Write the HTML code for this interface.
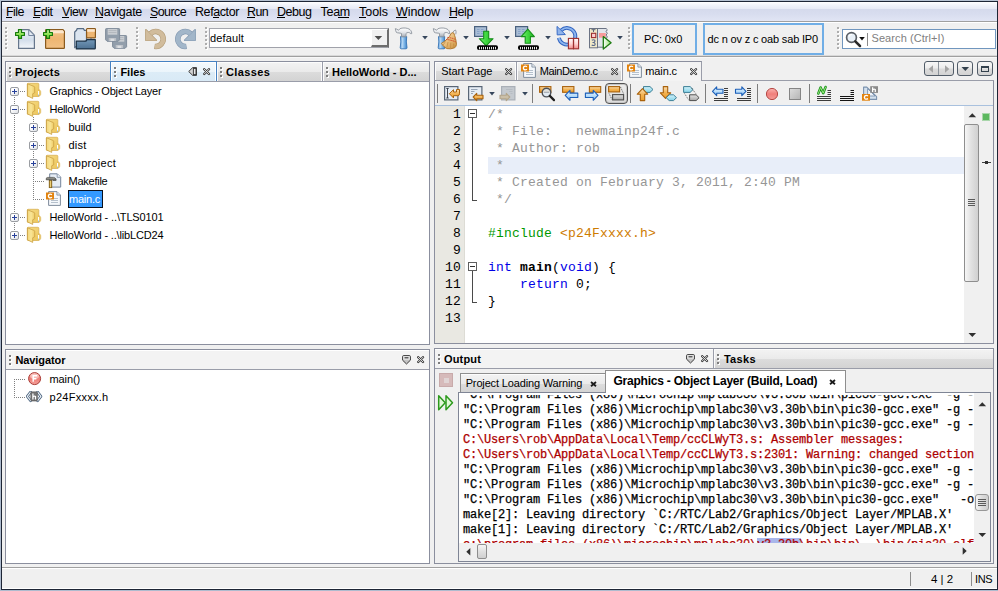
<!DOCTYPE html>
<html><head><meta charset="utf-8"><title>MPLAB X IDE</title><style>html,body{margin:0;padding:0}body{width:998px;height:591px;position:relative;overflow:hidden;background:#f0f0f0;font-family:'Liberation Sans', sans-serif;font-size:12px;color:#000}div,span,svg{position:absolute;display:block;box-sizing:border-box}span{white-space:pre}</style></head>
<body>
<div style="left:0px;top:0px;width:998px;height:591px;background:linear-gradient(#b6c2d2,#a9b6c8 50%,#aebbce)"></div>
<div style="left:1px;top:1px;width:997px;height:589px;background:#1d2535"></div>
<div style="left:2px;top:2px;width:995px;height:587px;background:#f0f0f0"></div>
<div style="left:2px;top:588px;width:995px;height:1px;background:#ffffff"></div>
<div style="left:2px;top:2px;width:995px;height:19px;background:linear-gradient(#ffffff 0,#f1f3fa 3px,#e6e9f5 7px,#d5daec 7px,#d8ddef 12px,#e1e5f4 19px)"></div>
<div style="left:2px;top:21px;width:995px;height:1px;background:#a0a0a0"></div>
<div style="left:2px;top:22px;width:995px;height:1px;background:#ffffff"></div>
<span style="left:6px;top:4px;font-size:12.5px;line-height:16px;letter-spacing:-0.539px;">File</span>
<span style="left:33px;top:4px;font-size:12.5px;line-height:16px;letter-spacing:-0.512px;">Edit</span>
<span style="left:62px;top:4px;font-size:12.5px;line-height:16px;letter-spacing:-0.469px;">View</span>
<span style="left:95px;top:4px;font-size:12.5px;line-height:16px;letter-spacing:-0.293px;">Navigate</span>
<span style="left:150px;top:4px;font-size:12.5px;line-height:16px;letter-spacing:-0.602px;">Source</span>
<span style="left:195px;top:4px;font-size:12.5px;line-height:16px;letter-spacing:-0.406px;">Refactor</span>
<span style="left:247px;top:4px;font-size:12.5px;line-height:16px;letter-spacing:-0.646px;">Run</span>
<span style="left:277px;top:4px;font-size:12.5px;line-height:16px;letter-spacing:-0.469px;">Debug</span>
<span style="left:320.5px;top:4px;font-size:12.5px;line-height:16px;letter-spacing:-0.270px;">Team</span>
<span style="left:359px;top:4px;font-size:12.5px;line-height:16px;letter-spacing:-0.037px;">Tools</span>
<span style="left:396px;top:4px;font-size:12.5px;line-height:16px;letter-spacing:-0.078px;">Window</span>
<span style="left:449px;top:4px;font-size:12.5px;line-height:16px;letter-spacing:-0.430px;">Help</span>
<div style="left:6px;top:17px;width:6px;height:1px;background:#000"></div>
<div style="left:33px;top:17px;width:7px;height:1px;background:#000"></div>
<div style="left:62px;top:17px;width:7px;height:1px;background:#000"></div>
<div style="left:95px;top:17px;width:8px;height:1px;background:#000"></div>
<div style="left:150px;top:17px;width:7px;height:1px;background:#000"></div>
<div style="left:213px;top:17px;width:6px;height:1px;background:#000"></div>
<div style="left:247px;top:17px;width:8px;height:1px;background:#000"></div>
<div style="left:277px;top:17px;width:8px;height:1px;background:#000"></div>
<div style="left:338px;top:17px;width:11px;height:1px;background:#000"></div>
<div style="left:359px;top:17px;width:7px;height:1px;background:#000"></div>
<div style="left:396px;top:17px;width:11px;height:1px;background:#000"></div>
<div style="left:449px;top:17px;width:8px;height:1px;background:#000"></div>
<div style="left:2px;top:55px;width:995px;height:1px;background:#d9d9d9"></div>
<div style="left:2px;top:56px;width:995px;height:1px;background:#a0a0a0"></div>
<div style="left:2px;top:57px;width:995px;height:1px;background:#f8f8f8"></div>
<div style="left:6px;top:28px;width:2px;height:2px;background:#ffffff"></div>
<div style="left:5px;top:27px;width:2px;height:2px;background:#adadad"></div>
<div style="left:6px;top:32px;width:2px;height:2px;background:#ffffff"></div>
<div style="left:5px;top:31px;width:2px;height:2px;background:#adadad"></div>
<div style="left:6px;top:36px;width:2px;height:2px;background:#ffffff"></div>
<div style="left:5px;top:35px;width:2px;height:2px;background:#adadad"></div>
<div style="left:6px;top:40px;width:2px;height:2px;background:#ffffff"></div>
<div style="left:5px;top:39px;width:2px;height:2px;background:#adadad"></div>
<div style="left:6px;top:44px;width:2px;height:2px;background:#ffffff"></div>
<div style="left:5px;top:43px;width:2px;height:2px;background:#adadad"></div>
<div style="left:6px;top:48px;width:2px;height:2px;background:#ffffff"></div>
<div style="left:5px;top:47px;width:2px;height:2px;background:#adadad"></div>
<div style="left:137px;top:28px;width:2px;height:2px;background:#ffffff"></div>
<div style="left:136px;top:27px;width:2px;height:2px;background:#adadad"></div>
<div style="left:137px;top:32px;width:2px;height:2px;background:#ffffff"></div>
<div style="left:136px;top:31px;width:2px;height:2px;background:#adadad"></div>
<div style="left:137px;top:36px;width:2px;height:2px;background:#ffffff"></div>
<div style="left:136px;top:35px;width:2px;height:2px;background:#adadad"></div>
<div style="left:137px;top:40px;width:2px;height:2px;background:#ffffff"></div>
<div style="left:136px;top:39px;width:2px;height:2px;background:#adadad"></div>
<div style="left:137px;top:44px;width:2px;height:2px;background:#ffffff"></div>
<div style="left:136px;top:43px;width:2px;height:2px;background:#adadad"></div>
<div style="left:137px;top:48px;width:2px;height:2px;background:#ffffff"></div>
<div style="left:136px;top:47px;width:2px;height:2px;background:#adadad"></div>
<div style="left:206px;top:28px;width:2px;height:2px;background:#ffffff"></div>
<div style="left:205px;top:27px;width:2px;height:2px;background:#adadad"></div>
<div style="left:206px;top:32px;width:2px;height:2px;background:#ffffff"></div>
<div style="left:205px;top:31px;width:2px;height:2px;background:#adadad"></div>
<div style="left:206px;top:36px;width:2px;height:2px;background:#ffffff"></div>
<div style="left:205px;top:35px;width:2px;height:2px;background:#adadad"></div>
<div style="left:206px;top:40px;width:2px;height:2px;background:#ffffff"></div>
<div style="left:205px;top:39px;width:2px;height:2px;background:#adadad"></div>
<div style="left:206px;top:44px;width:2px;height:2px;background:#ffffff"></div>
<div style="left:205px;top:43px;width:2px;height:2px;background:#adadad"></div>
<div style="left:206px;top:48px;width:2px;height:2px;background:#ffffff"></div>
<div style="left:205px;top:47px;width:2px;height:2px;background:#adadad"></div>
<div style="left:629px;top:28px;width:2px;height:2px;background:#ffffff"></div>
<div style="left:628px;top:27px;width:2px;height:2px;background:#adadad"></div>
<div style="left:629px;top:32px;width:2px;height:2px;background:#ffffff"></div>
<div style="left:628px;top:31px;width:2px;height:2px;background:#adadad"></div>
<div style="left:629px;top:36px;width:2px;height:2px;background:#ffffff"></div>
<div style="left:628px;top:35px;width:2px;height:2px;background:#adadad"></div>
<div style="left:629px;top:40px;width:2px;height:2px;background:#ffffff"></div>
<div style="left:628px;top:39px;width:2px;height:2px;background:#adadad"></div>
<div style="left:629px;top:44px;width:2px;height:2px;background:#ffffff"></div>
<div style="left:628px;top:43px;width:2px;height:2px;background:#adadad"></div>
<div style="left:629px;top:48px;width:2px;height:2px;background:#ffffff"></div>
<div style="left:628px;top:47px;width:2px;height:2px;background:#adadad"></div>
<div style="left:838px;top:28px;width:2px;height:2px;background:#ffffff"></div>
<div style="left:837px;top:27px;width:2px;height:2px;background:#adadad"></div>
<div style="left:838px;top:32px;width:2px;height:2px;background:#ffffff"></div>
<div style="left:837px;top:31px;width:2px;height:2px;background:#adadad"></div>
<div style="left:838px;top:36px;width:2px;height:2px;background:#ffffff"></div>
<div style="left:837px;top:35px;width:2px;height:2px;background:#adadad"></div>
<div style="left:838px;top:40px;width:2px;height:2px;background:#ffffff"></div>
<div style="left:837px;top:39px;width:2px;height:2px;background:#adadad"></div>
<div style="left:838px;top:44px;width:2px;height:2px;background:#ffffff"></div>
<div style="left:837px;top:43px;width:2px;height:2px;background:#adadad"></div>
<div style="left:838px;top:48px;width:2px;height:2px;background:#ffffff"></div>
<div style="left:837px;top:47px;width:2px;height:2px;background:#adadad"></div>
<svg style="left:13px;top:27px" width="24" height="24" viewBox="0 0 24 24"><defs><linearGradient id="g1" x1="0" y1="0" x2="0" y2="1"><stop offset="0" stop-color="#eef2f8"/><stop offset="0.55" stop-color="#d3deeb"/><stop offset="1" stop-color="#f4f7fb"/></linearGradient></defs><path d="M5.600 2.600h10.300l5.500 5.700v13.100h-15.800z" fill="url(#g1)" stroke="#66768c" stroke-width="1.200"/><path d="M15.700 2.800v5.700h5.500z" fill="#e6ecf4" stroke="#7888a0" stroke-width="1"/><defs><linearGradient id="g2" x1="0" y1="0" x2="0" y2="1"><stop offset="0" stop-color="#d4f8b0"/><stop offset="0.5" stop-color="#8ee255"/><stop offset="1" stop-color="#5fc82f"/></linearGradient></defs><path d="M5.5 2.6h3v2.900h2.900v3h-2.900v2.900h-3v-2.900h-2.900v-3h2.900z" fill="url(#g2)" stroke="#167a0c" stroke-width="1.200" stroke-linejoin="round"/></svg>
<svg style="left:42px;top:27px" width="24" height="24" viewBox="0 0 24 24"><defs><linearGradient id="g3" x1="0" y1="0" x2="0" y2="1"><stop offset="0" stop-color="#f2c48c"/><stop offset="0.5" stop-color="#eeb672"/><stop offset="1" stop-color="#f1c084"/></linearGradient></defs><path d="M3.600 3.300q0-0.700 0.700-0.700h16.600l1.500 1.700v16.400q0 0.700-0.700 0.700h-17.400q-0.700 0-0.700-0.700z" fill="url(#g3)" stroke="#8a5a1e" stroke-width="1.200"/><path d="M4.300 3.300h16.500l1 1.200v1.700h-17.500z" fill="#fbe6cc"/><defs><linearGradient id="g4" x1="0" y1="0" x2="0" y2="1"><stop offset="0" stop-color="#d4f8b0"/><stop offset="0.5" stop-color="#8ee255"/><stop offset="1" stop-color="#5fc82f"/></linearGradient></defs><path d="M4.5 2.6h3v2.900h2.900v3h-2.900v2.900h-3v-2.900h-2.900v-3h2.900z" fill="url(#g4)" stroke="#167a0c" stroke-width="1.200" stroke-linejoin="round"/></svg>
<svg style="left:73px;top:27px" width="24" height="24" viewBox="0 0 24 24"><defs><linearGradient id="g5" x1="0" y1="0" x2="0" y2="1"><stop offset="0" stop-color="#7398b8"/><stop offset="1" stop-color="#4d7192"/></linearGradient></defs><path d="M1.700 20.500v-15.500l1.800-1.700 0.700-1.600h6.200l1 1.700h2.100v10z" fill="#dbe5f0" stroke="#566b84" stroke-width="1.200"/><rect x="13.600" y="1.600" width="8.800" height="9.300" rx="0.700" fill="#eeb672" stroke="#8a5a1e" stroke-width="1.200"/><path d="M14.200 2.200h7.600v2.600h-7.600z" fill="#fbe6cc"/><path d="M18 11v2" stroke="#566b84" stroke-width="1"/><path d="M3.300 14.200h9.700l1-1.600h8.300v8.600q0 0.700-0.700 0.700h-18.300z" fill="url(#g5)" stroke="#1d3246" stroke-width="1.200" stroke-linejoin="round"/></svg>
<svg style="left:104px;top:27px" width="24" height="24" viewBox="0 0 24 24"><path d="M8.6 9.3q0-0.700 0.700-0.700h12.600q0.700 0 0.700 0.700v10.500l-1.500 1.500h-11l-1.500-1.500z" fill="#929eab" stroke="#808d9b" stroke-width="1"/><rect x="10.7" y="9" width="9.600" height="5.700" fill="#c9cdd2"/><path d="M11.5 10.5h8M11.5 12.5h8" stroke="#b4b9bf"/><rect x="11.7" y="18" width="7.400" height="3" fill="#bcc1c7"/><rect x="13.5" y="18.7" width="3.800" height="2.300" fill="#dcdfe2"/><path d="M1.6 2.3q0-0.700 0.700-0.700h12.600q0.700 0 0.700 0.700v10.500l-1.500 1.500h-11l-1.500-1.500z" fill="#929eab" stroke="#808d9b" stroke-width="1"/><rect x="3.7" y="2" width="9.600" height="5.700" fill="#c9cdd2"/><path d="M4.5 3.5h8M4.5 5.5h8" stroke="#b4b9bf"/><rect x="4.7" y="11" width="7.400" height="3" fill="#bcc1c7"/><rect x="6.5" y="11.7" width="3.800" height="2.300" fill="#dcdfe2"/></svg>
<svg style="left:144px;top:27px" width="24" height="24" viewBox="0 0 24 24"><g><path d="M6.400 6.700A7.500 7.500 0 1 1 10.500 19.400" fill="none" stroke="#b19973" stroke-width="5.500"/><path d="M1.900 2.900L1.900 13.300L12.300 13.300Z" fill="#b19973" stroke="#b19973" stroke-width="1.600" stroke-linejoin="round"/><path d="M6.400 6.700A7.500 7.500 0 1 1 10.900 19.450" fill="none" stroke="#d1bc9c" stroke-width="4.300"/><path d="M1.900 2.900L1.900 13.300L12.300 13.300Z" fill="#d1bc9c" stroke="#d1bc9c" stroke-width="0.500" stroke-linejoin="round"/></g></svg>
<svg style="left:173px;top:27px" width="24" height="24" viewBox="0 0 24 24"><g transform="translate(24,0) scale(-1,1)"><path d="M6.400 6.700A7.500 7.500 0 1 1 10.500 19.400" fill="none" stroke="#8096ae" stroke-width="5.500"/><path d="M1.900 2.900L1.900 13.300L12.300 13.300Z" fill="#8096ae" stroke="#8096ae" stroke-width="1.600" stroke-linejoin="round"/><path d="M6.400 6.700A7.500 7.500 0 1 1 10.900 19.450" fill="none" stroke="#a2b6c9" stroke-width="4.300"/><path d="M1.900 2.900L1.900 13.300L12.300 13.300Z" fill="#a2b6c9" stroke="#a2b6c9" stroke-width="0.500" stroke-linejoin="round"/></g></svg>
<div style="left:209px;top:28px;width:180px;height:20px;background:#fff;border:1px solid #a4a6ae;border-right-color:#6d6d6d;border-bottom-color:#a0a2aa"></div>
<span style="left:210px;top:30px;font-size:11px;line-height:16px;letter-spacing:0.138px;">default</span>
<div style="left:371px;top:29px;width:17px;height:18px;background:#f0f0f0;border-top:1px solid #fff;border-left:1px solid #fff;border-right:1px solid #6d6d6d;border-bottom:2px solid #6d6d6d"></div>
<svg style="left:374px;top:36px" width="9" height="5" viewBox="0 0 9 5"><path d="M0.600 0h7.600l-3.800 4z" fill="#4d4d4d"/></svg>
<svg style="left:394px;top:27px" width="24" height="24" viewBox="0 0 24 24"><defs><linearGradient id="g6" x1="0" y1="0" x2="0" y2="1"><stop offset="0" stop-color="#ffffff"/><stop offset="0.5" stop-color="#e3e6ea"/><stop offset="1" stop-color="#a4abb4"/></linearGradient><linearGradient id="g7" x1="0" y1="0" x2="1" y2="0"><stop offset="0" stop-color="#5b9bd8"/><stop offset="0.3" stop-color="#b9d9f5"/><stop offset="0.62" stop-color="#79b3e6"/><stop offset="1" stop-color="#3f82c8"/></linearGradient></defs><g transform="translate(0,0)"><path d="M6.500 9.600h6.200q-0.800 5.200 0.300 11q0 1.200-1 1.200h-4.800q-1 0-1-1.200q1.100-5.800 0.300-11z" fill="url(#g7)" stroke="#3674b6" stroke-width="0.900"/><path d="M1.300 1.600C2.500 1.800 3.600 2.600 4.500 3.300C5.200 2.200 6 1.500 7 1.300C9.500 0.700 13 0.900 15 2C16.500 2.800 17.600 4 17.800 6.500L16.900 6.900C16 5.800 15 5.400 14 5.500C13 5.600 12.200 6 12 6.500V9.800H7.500V6.500C6.800 6.200 5.900 6.100 5 6C3.800 5.900 3 5.700 2.500 5.500C1.800 4.500 1.400 3 1.300 1.600Z" fill="url(#g6)" stroke="#8d949d" stroke-width="0.900" stroke-linejoin="round"/></g></svg>
<svg style="left:421.5px;top:36px" width="7" height="4" viewBox="0 0 7 4"><path d="M0.200 0h5.600l-2.800 3.400z" fill="#36465c"/></svg>
<svg style="left:432px;top:27px" width="28" height="24" viewBox="0 0 28 24"><defs><linearGradient id="g9" x1="0" y1="0" x2="0" y2="1"><stop offset="0" stop-color="#ffffff"/><stop offset="0.5" stop-color="#e3e6ea"/><stop offset="1" stop-color="#a4abb4"/></linearGradient><linearGradient id="g10" x1="0" y1="0" x2="1" y2="0"><stop offset="0" stop-color="#5b9bd8"/><stop offset="0.3" stop-color="#b9d9f5"/><stop offset="0.62" stop-color="#79b3e6"/><stop offset="1" stop-color="#3f82c8"/></linearGradient></defs><g transform="translate(0,0)"><path d="M6.500 9.600h6.200q-0.800 5.200 0.300 11q0 1.200-1 1.200h-4.800q-1 0-1-1.200q1.100-5.800 0.300-11z" fill="url(#g10)" stroke="#3674b6" stroke-width="0.900"/><path d="M1.300 1.600C2.500 1.800 3.600 2.600 4.500 3.300C5.200 2.200 6 1.500 7 1.300C9.500 0.700 13 0.900 15 2C16.500 2.800 17.600 4 17.800 6.500L16.900 6.900C16 5.800 15 5.400 14 5.500C13 5.600 12.200 6 12 6.500V9.800H7.500V6.500C6.800 6.200 5.900 6.100 5 6C3.800 5.900 3 5.700 2.500 5.500C1.800 4.500 1.400 3 1.300 1.600Z" fill="url(#g9)" stroke="#8d949d" stroke-width="0.900" stroke-linejoin="round"/></g><defs><linearGradient id="g8" x1="0" y1="0" x2="1" y2="1"><stop offset="0" stop-color="#f8e4c0"/><stop offset="0.5" stop-color="#e9bd7a"/><stop offset="1" stop-color="#c88c38"/></linearGradient></defs><path d="M20.300 6.500q1.300-3.300 3.300-3.500q0.900 1.500 0.200 4.300" fill="#eef0f3" stroke="#8d949d" stroke-width="0.900"/><path d="M19.300 6.200q1.300-0.900 2.600 0c1 3.200 2.400 7 2.600 11.300q-0.400 2.200-1.800 3.300q-4 1.600-8 0.800q-3.200-1.800-5.400-5.200c4.200-2.200 8.200-6 10-10.200z" fill="url(#g8)" stroke="#aa7226" stroke-width="0.900" stroke-linejoin="round"/><path d="M15.400 10.400q4.300 0.400 8.100 2" fill="none" stroke="#d2492a" stroke-width="1" stroke-dasharray="1.600 0.600"/><path d="M14 12.400q5 0.500 9.900 2.500" fill="none" stroke="#d2492a" stroke-width="1" stroke-dasharray="1.600 0.600"/><path d="M13.500 14.500l-2.300 3.500M16 15l-1.200 5.800M18.800 15.700l-0.300 6M21.500 16.600l0.600 4.400" stroke="#c08a3e" stroke-width="0.700" fill="none"/></svg>
<svg style="left:462.5px;top:36px" width="7" height="4" viewBox="0 0 7 4"><path d="M0.200 0h5.600l-2.800 3.400z" fill="#36465c"/></svg>
<svg style="left:472px;top:24px" width="28" height="28" viewBox="0 0 28 28"><defs><linearGradient id="g11" x1="0" y1="0" x2="1" y2="0"><stop offset="0" stop-color="#7af07a"/><stop offset="0.5" stop-color="#3fd83f"/><stop offset="1" stop-color="#27b427"/></linearGradient></defs><rect x="2.6" y="2.6" width="12" height="9.800" fill="#a9bdd5" stroke="#4a617e" stroke-width="1.200"/><path d="M5 5.5h2.500M9 5.5h2.500M5 7.5h2.500M9 7.5h2.500M5 9.5h2.500M9 9.5h2.500" stroke="#86a2c6" stroke-width="0.900"/><path d="M11.700 7.300h5v7.400h4.400l-6.900 7.200-6.900-7.200h4.400z" fill="url(#g11)" stroke="#16901a" stroke-width="1.100" stroke-linejoin="round"/><rect x="5" y="21.3" width="21" height="4.600" rx="2" fill="#000"/><path d="M7.5 23.3v1.700M9.5 23.3v1.700M11.5 23.3v1.700M13.5 23.3v1.700M15.5 23.3v1.700M17.5 23.3v1.700M19.5 23.3v1.700M21.5 23.3v1.700M23.5 23.3v1.700" stroke="#fff" stroke-width="0.900" stroke-linecap="round"/></svg>
<svg style="left:503.5px;top:36px" width="7" height="4" viewBox="0 0 7 4"><path d="M0.200 0h5.600l-2.800 3.400z" fill="#36465c"/></svg>
<svg style="left:513px;top:24px" width="28" height="28" viewBox="0 0 28 28"><defs><linearGradient id="g12" x1="0" y1="0" x2="1" y2="0"><stop offset="0" stop-color="#7af07a"/><stop offset="0.5" stop-color="#3fd83f"/><stop offset="1" stop-color="#27b427"/></linearGradient></defs><rect x="2.6" y="2.6" width="12" height="9.800" fill="#a9bdd5" stroke="#4a617e" stroke-width="1.200"/><path d="M5 5.5h2.500M9 5.5h2.500M5 7.5h2.500M9 7.5h2.500M5 9.5h2.500M9 9.5h2.500" stroke="#86a2c6" stroke-width="0.900"/><path d="M12.200 19.300h5.200v-6.700h4l-6.600-7.400-6.600 7.400h4z" fill="url(#g12)" stroke="#16901a" stroke-width="1.100" stroke-linejoin="round"/><rect x="5" y="21.3" width="21" height="4.600" rx="2" fill="#000"/><path d="M7.5 23.3v1.700M9.5 23.3v1.700M11.5 23.3v1.700M13.5 23.3v1.700M15.5 23.3v1.700M17.5 23.3v1.700M19.5 23.3v1.700M21.5 23.3v1.700M23.5 23.3v1.700" stroke="#fff" stroke-width="0.900" stroke-linecap="round"/></svg>
<svg style="left:544.5px;top:36px" width="7" height="4" viewBox="0 0 7 4"><path d="M0.200 0h5.600l-2.800 3.400z" fill="#36465c"/></svg>
<svg style="left:555px;top:24px" width="26" height="28" viewBox="0 0 26 28"><defs><linearGradient id="g13" x1="0" y1="0" x2="0" y2="1"><stop offset="0" stop-color="#ffffff"/><stop offset="0.5" stop-color="#ffd6d6"/><stop offset="1" stop-color="#f08a8a"/></linearGradient></defs><path d="M6.200 6.400a8.300 8.300 0 1 1-2.300 7.400" fill="none" stroke="#2f62c0" stroke-width="3.800"/><path d="M6.200 6.400a8.300 8.300 0 1 1-2.300 7.400" fill="none" stroke="#8db6ee" stroke-width="1.800"/><path d="M2 2.400l0.200 8.500 8.200-0.400z" fill="#8fb3ea" stroke="#3a6cc6" stroke-width="1"/><rect x="13.400" y="14.400" width="5" height="10.400" fill="url(#g13)" stroke="#9c2d2d" stroke-width="1.100"/><rect x="18.600" y="14.400" width="5" height="10.400" fill="url(#g13)" stroke="#9c2d2d" stroke-width="1.100"/></svg>
<svg style="left:588px;top:27px" width="26" height="24" viewBox="0 0 26 24"><defs><linearGradient id="g14" x1="0" y1="0" x2="1" y2="0"><stop offset="0" stop-color="#ffffff"/><stop offset="1" stop-color="#8fe06a"/></linearGradient></defs><path d="M9.500 1.500h8.600l1.200 1.200-1.200 1.800 1.200 1.800-1.200 1.800 1.200 1.800-1.200 1.800 1.200 1.800-1.200 1.800 1.200 1.800-1.200 1.800v1.300h-8.600z" fill="#e1e5ea" stroke="#6b7384" stroke-width="1"/><rect x="11" y="6" width="6.800" height="4.700" fill="#f79a9a"/><rect x="1.500" y="1.500" width="8" height="19.300" fill="#f1e9c9" stroke="#6b7384" stroke-width="1"/><path d="M3.500 2.700h4M5.500 2.700v2.300" stroke="#5a6478" stroke-width="1"/><rect x="3.500" y="6.300" width="4.300" height="4.300" fill="#fbd0d0" stroke="#9c2d2d" stroke-width="1.100"/><path d="M3.800 13.300q1.700-1 3 0q0.800 1.300-1.400 2.200q2.400 0.700 1.500 2.500q-1.500 1.100-3.200 0" fill="none" stroke="#5a6a8c" stroke-width="1.100"/><path d="M15.300 9.600l7.800 6.200-7.800 6.200z" fill="url(#g14)" stroke="#1c7a10" stroke-width="1.300" stroke-linejoin="round"/></svg>
<svg style="left:616.5px;top:36px" width="7" height="4" viewBox="0 0 7 4"><path d="M0.200 0h5.600l-2.800 3.400z" fill="#36465c"/></svg>
<div style="left:632px;top:23px;width:65px;height:32px;border:2px solid #70aee6;background:#f0f0f0"></div>
<span style="left:644px;top:31px;font-size:11px;line-height:16px;letter-spacing:-0.134px;">PC: 0x0</span>
<div style="left:703px;top:23px;width:121px;height:32px;border:2px solid #70aee6;background:#f0f0f0"></div>
<span style="left:707.5px;top:31px;font-size:11px;line-height:16px;letter-spacing:-0.168px;">dc n ov z c oab sab IP0</span>
<div style="left:842px;top:29px;width:154px;height:20px;background:#fff;border:1px solid #7096be"></div>
<svg style="left:845px;top:31px" width="17" height="17" viewBox="0 0 17 17"><circle cx="6.500" cy="6.500" r="4.900" fill="#e9f0f7" stroke="#5a5f66" stroke-width="1.700"/><path d="M4 5.500a3 3 0 0 1 3-2" stroke="#fff" stroke-width="1.200" fill="none"/><path d="M10.300 10.300l4.700 4.700" stroke="#2a2a2a" stroke-width="2.500" stroke-linecap="round"/></svg>
<svg style="left:859px;top:37px" width="7" height="4" viewBox="0 0 7 4"><path d="M0.200 0h5.600l-2.800 3.400z" fill="#101010"/></svg>
<div style="left:867px;top:33px;width:1px;height:13px;background:#8a8a8a"></div>
<span style="left:871.5px;top:30px;font-size:11px;line-height:16px;letter-spacing:0.078px;color:#808080;">Search (Ctrl+I)</span>
<div style="left:5px;top:61px;width:425px;height:284px;border:1px solid #8b8f9e;background:#fff"></div>
<div style="left:6px;top:62px;width:104px;height:19px;background:linear-gradient(#f3f3f3 0,#eaeaea 10px,#dcdcdc 10px,#d3d3d3 100%)"></div>
<div style="left:6px;top:62px;width:104px;height:1px;background:#fcfcfc"></div>
<div style="left:6px;top:62px;width:1px;height:19px;background:#fcfcfc"></div>
<div style="left:10px;top:68px;width:2px;height:2px;background:#ffffff"></div>
<div style="left:9px;top:67px;width:2px;height:2px;background:#7d7d7d"></div>
<div style="left:10px;top:72px;width:2px;height:2px;background:#ffffff"></div>
<div style="left:9px;top:71px;width:2px;height:2px;background:#7d7d7d"></div>
<div style="left:10px;top:76px;width:2px;height:2px;background:#ffffff"></div>
<div style="left:9px;top:75px;width:2px;height:2px;background:#7d7d7d"></div>
<span style="left:15px;top:64px;font-size:11px;line-height:16px;letter-spacing:0.197px;font-weight:bold;">Projects</span>
<div style="left:217px;top:62px;width:106px;height:19px;background:linear-gradient(#f3f3f3 0,#eaeaea 10px,#dcdcdc 10px,#d3d3d3 100%)"></div>
<div style="left:217px;top:62px;width:106px;height:1px;background:#fcfcfc"></div>
<div style="left:217px;top:62px;width:1px;height:19px;background:#fcfcfc"></div>
<div style="left:321px;top:62px;width:1px;height:19px;background:#fcfcfc"></div>
<div style="left:322px;top:62px;width:1px;height:19px;background:#9a9da9"></div>
<div style="left:221px;top:68px;width:2px;height:2px;background:#ffffff"></div>
<div style="left:220px;top:67px;width:2px;height:2px;background:#7d7d7d"></div>
<div style="left:221px;top:72px;width:2px;height:2px;background:#ffffff"></div>
<div style="left:220px;top:71px;width:2px;height:2px;background:#7d7d7d"></div>
<div style="left:221px;top:76px;width:2px;height:2px;background:#ffffff"></div>
<div style="left:220px;top:75px;width:2px;height:2px;background:#7d7d7d"></div>
<span style="left:226px;top:64px;font-size:11px;line-height:16px;letter-spacing:0.387px;font-weight:bold;">Classes</span>
<div style="left:323px;top:62px;width:106px;height:19px;background:linear-gradient(#f3f3f3 0,#eaeaea 10px,#dcdcdc 10px,#d3d3d3 100%)"></div>
<div style="left:323px;top:62px;width:106px;height:1px;background:#fcfcfc"></div>
<div style="left:323px;top:62px;width:1px;height:19px;background:#fcfcfc"></div>
<div style="left:327px;top:68px;width:2px;height:2px;background:#ffffff"></div>
<div style="left:326px;top:67px;width:2px;height:2px;background:#7d7d7d"></div>
<div style="left:327px;top:72px;width:2px;height:2px;background:#ffffff"></div>
<div style="left:326px;top:71px;width:2px;height:2px;background:#7d7d7d"></div>
<div style="left:327px;top:76px;width:2px;height:2px;background:#ffffff"></div>
<div style="left:326px;top:75px;width:2px;height:2px;background:#7d7d7d"></div>
<span style="left:332px;top:64px;font-size:11px;line-height:16px;letter-spacing:-0.009px;font-weight:bold;">HelloWorld - D...</span>
<div style="left:6px;top:81px;width:423px;height:1px;background:#9a9da9"></div>
<div style="left:110px;top:61px;width:107px;height:20px;background:linear-gradient(#f4fafd 0,#ebf5fb 10px,#dcecf7 10px,#d9eaf6 100%);border:1px solid #4682c2;border-bottom:none"></div>
<div style="left:111px;top:62px;width:105px;height:1px;background:#ffffff"></div>
<div style="left:111px;top:62px;width:1px;height:19px;background:#ffffff"></div>
<div style="left:215px;top:62px;width:1px;height:19px;background:#ffffff"></div>
<div style="left:115px;top:68px;width:2px;height:2px;background:#ffffff"></div>
<div style="left:114px;top:67px;width:2px;height:2px;background:#7d7d7d"></div>
<div style="left:115px;top:72px;width:2px;height:2px;background:#ffffff"></div>
<div style="left:114px;top:71px;width:2px;height:2px;background:#7d7d7d"></div>
<div style="left:115px;top:76px;width:2px;height:2px;background:#ffffff"></div>
<div style="left:114px;top:75px;width:2px;height:2px;background:#7d7d7d"></div>
<span style="left:120.4px;top:64px;font-size:11px;line-height:16px;letter-spacing:-0.016px;font-weight:bold;">Files</span>
<svg style="left:188px;top:67px" width="10" height="10" viewBox="0 0 10 10"><path d="M0.700 4.500l4-3.900h3.800v7.800h-3.800z" fill="#d4d4d4" stroke="#3c3c3c" stroke-width="1" stroke-linejoin="round"/><rect x="5.400" y="1.400" width="2.600" height="6.200" fill="#e8e8e8" stroke="#3c3c3c" stroke-width="1"/></svg>
<svg style="left:203px;top:68px" width="8" height="8" viewBox="0 0 8 8"><path d="M1.200 1.200l4.800 4.800M6 1.200l-4.800 4.800" stroke="#3c3c3c" stroke-width="2.300" stroke-linecap="round"/><path d="M1.300 1.300l4.600 4.600M5.900 1.300l-4.600 4.600" stroke="#ececec" stroke-width="0.900" stroke-linecap="round"/></svg>
<div style="left:14px;top:97px;width:1px;height:134px;background:repeating-linear-gradient(#7f7f7f 0,#7f7f7f 1px,transparent 1px,transparent 2px)"></div>
<div style="left:33px;top:117px;width:1px;height:83px;background:repeating-linear-gradient(#7f7f7f 0,#7f7f7f 1px,transparent 1px,transparent 2px)"></div>
<div style="left:20px;top:91px;width:6px;height:1px;background:repeating-linear-gradient(90deg,#7f7f7f 0,#7f7f7f 1px,transparent 1px,transparent 2px)"></div>
<div style="left:10px;top:87px;width:9px;height:9px;border:1px solid #9a9da2;background:linear-gradient(135deg,#fff 30%,#dde0e5);border-radius:2px"></div>
<div style="left:12px;top:91px;width:5px;height:1px;background:#27409a"></div>
<div style="left:14px;top:89px;width:1px;height:5px;background:#27409a"></div>
<svg style="left:26px;top:82px" width="16" height="18" viewBox="0 0 16 18"><defs><linearGradient id="g15" x1="0" y1="0" x2="1" y2="1"><stop offset="0" stop-color="#f6dc86"/><stop offset="1" stop-color="#ecc55a"/></linearGradient><linearGradient id="g16" x1="0" y1="0" x2="1" y2="0"><stop offset="0" stop-color="#f3d67c"/><stop offset="0.5" stop-color="#f9e596"/><stop offset="1" stop-color="#efcc66"/></linearGradient></defs><path d="M12.300 7.400q2.300 0.600 2.400 2.200v2.800q-0.200 1.600-2.400 2.100z" fill="#f3d47a" stroke="#d9b256" stroke-width="0.700"/><rect x="1.300" y="1.300" width="11.500" height="13.200" rx="0.900" fill="url(#g15)" stroke="#d9b256" stroke-width="0.800"/><rect x="12" y="9" width="1" height="4" fill="#ffffff"/><rect x="12" y="12.600" width="1" height="1" fill="#86b4ee"/><path d="M1.500 1.800l6.700 2.700q0.500 0.300 0.500 0.800v5.500l-2 1v4.600l-5.200-2.500z" fill="url(#g16)" stroke="#c9a044" stroke-width="0.800" stroke-linejoin="round"/></svg>
<span style="left:49.5px;top:83px;font-size:11px;line-height:16px;letter-spacing:-0.181px;">Graphics - Object Layer</span>
<div style="left:20px;top:109px;width:6px;height:1px;background:repeating-linear-gradient(90deg,#7f7f7f 0,#7f7f7f 1px,transparent 1px,transparent 2px)"></div>
<div style="left:10px;top:105px;width:9px;height:9px;border:1px solid #9a9da2;background:linear-gradient(135deg,#fff 30%,#dde0e5);border-radius:2px"></div>
<div style="left:12px;top:109px;width:5px;height:1px;background:#27409a"></div>
<svg style="left:26px;top:100px" width="16" height="18" viewBox="0 0 16 18"><defs><linearGradient id="g17" x1="0" y1="0" x2="1" y2="1"><stop offset="0" stop-color="#f6dc86"/><stop offset="1" stop-color="#ecc55a"/></linearGradient><linearGradient id="g18" x1="0" y1="0" x2="1" y2="0"><stop offset="0" stop-color="#f3d67c"/><stop offset="0.5" stop-color="#f9e596"/><stop offset="1" stop-color="#efcc66"/></linearGradient></defs><path d="M12.300 7.400q2.300 0.600 2.400 2.200v2.800q-0.200 1.600-2.400 2.100z" fill="#f3d47a" stroke="#d9b256" stroke-width="0.700"/><rect x="1.300" y="1.300" width="11.500" height="13.200" rx="0.900" fill="url(#g17)" stroke="#d9b256" stroke-width="0.800"/><rect x="12" y="9" width="1" height="4" fill="#ffffff"/><rect x="12" y="12.600" width="1" height="1" fill="#86b4ee"/><path d="M1.500 1.800l6.700 2.700q0.500 0.300 0.500 0.800v5.500l-2 1v4.600l-5.200-2.500z" fill="url(#g18)" stroke="#c9a044" stroke-width="0.800" stroke-linejoin="round"/></svg>
<span style="left:49.5px;top:101px;font-size:11px;line-height:16px;letter-spacing:-0.309px;">HelloWorld</span>
<div style="left:39px;top:127px;width:6px;height:1px;background:repeating-linear-gradient(90deg,#7f7f7f 0,#7f7f7f 1px,transparent 1px,transparent 2px)"></div>
<div style="left:29px;top:123px;width:9px;height:9px;border:1px solid #9a9da2;background:linear-gradient(135deg,#fff 30%,#dde0e5);border-radius:2px"></div>
<div style="left:31px;top:127px;width:5px;height:1px;background:#27409a"></div>
<div style="left:33px;top:125px;width:1px;height:5px;background:#27409a"></div>
<svg style="left:45px;top:118px" width="16" height="18" viewBox="0 0 16 18"><defs><linearGradient id="g19" x1="0" y1="0" x2="1" y2="1"><stop offset="0" stop-color="#f6dc86"/><stop offset="1" stop-color="#ecc55a"/></linearGradient><linearGradient id="g20" x1="0" y1="0" x2="1" y2="0"><stop offset="0" stop-color="#f3d67c"/><stop offset="0.5" stop-color="#f9e596"/><stop offset="1" stop-color="#efcc66"/></linearGradient></defs><path d="M12.300 7.400q2.300 0.600 2.400 2.200v2.800q-0.200 1.600-2.400 2.100z" fill="#f3d47a" stroke="#d9b256" stroke-width="0.700"/><rect x="1.300" y="1.300" width="11.500" height="13.200" rx="0.900" fill="url(#g19)" stroke="#d9b256" stroke-width="0.800"/><rect x="12" y="9" width="1" height="4" fill="#ffffff"/><rect x="12" y="12.600" width="1" height="1" fill="#86b4ee"/><path d="M1.500 1.800l6.700 2.700q0.500 0.300 0.500 0.800v5.500l-2 1v4.600l-5.200-2.500z" fill="url(#g20)" stroke="#c9a044" stroke-width="0.800" stroke-linejoin="round"/></svg>
<span style="left:68.5px;top:119px;font-size:11px;line-height:16px;letter-spacing:-0.050px;">build</span>
<div style="left:39px;top:145px;width:6px;height:1px;background:repeating-linear-gradient(90deg,#7f7f7f 0,#7f7f7f 1px,transparent 1px,transparent 2px)"></div>
<div style="left:29px;top:141px;width:9px;height:9px;border:1px solid #9a9da2;background:linear-gradient(135deg,#fff 30%,#dde0e5);border-radius:2px"></div>
<div style="left:31px;top:145px;width:5px;height:1px;background:#27409a"></div>
<div style="left:33px;top:143px;width:1px;height:5px;background:#27409a"></div>
<svg style="left:45px;top:136px" width="16" height="18" viewBox="0 0 16 18"><defs><linearGradient id="g21" x1="0" y1="0" x2="1" y2="1"><stop offset="0" stop-color="#f6dc86"/><stop offset="1" stop-color="#ecc55a"/></linearGradient><linearGradient id="g22" x1="0" y1="0" x2="1" y2="0"><stop offset="0" stop-color="#f3d67c"/><stop offset="0.5" stop-color="#f9e596"/><stop offset="1" stop-color="#efcc66"/></linearGradient></defs><path d="M12.300 7.400q2.300 0.600 2.400 2.200v2.800q-0.200 1.600-2.400 2.100z" fill="#f3d47a" stroke="#d9b256" stroke-width="0.700"/><rect x="1.300" y="1.300" width="11.500" height="13.200" rx="0.900" fill="url(#g21)" stroke="#d9b256" stroke-width="0.800"/><rect x="12" y="9" width="1" height="4" fill="#ffffff"/><rect x="12" y="12.600" width="1" height="1" fill="#86b4ee"/><path d="M1.500 1.800l6.700 2.700q0.500 0.300 0.500 0.800v5.500l-2 1v4.600l-5.200-2.500z" fill="url(#g22)" stroke="#c9a044" stroke-width="0.800" stroke-linejoin="round"/></svg>
<span style="left:68.5px;top:137px;font-size:11px;line-height:16px;letter-spacing:0.219px;">dist</span>
<div style="left:39px;top:163px;width:6px;height:1px;background:repeating-linear-gradient(90deg,#7f7f7f 0,#7f7f7f 1px,transparent 1px,transparent 2px)"></div>
<div style="left:29px;top:159px;width:9px;height:9px;border:1px solid #9a9da2;background:linear-gradient(135deg,#fff 30%,#dde0e5);border-radius:2px"></div>
<div style="left:31px;top:163px;width:5px;height:1px;background:#27409a"></div>
<div style="left:33px;top:161px;width:1px;height:5px;background:#27409a"></div>
<svg style="left:45px;top:154px" width="16" height="18" viewBox="0 0 16 18"><defs><linearGradient id="g23" x1="0" y1="0" x2="1" y2="1"><stop offset="0" stop-color="#f6dc86"/><stop offset="1" stop-color="#ecc55a"/></linearGradient><linearGradient id="g24" x1="0" y1="0" x2="1" y2="0"><stop offset="0" stop-color="#f3d67c"/><stop offset="0.5" stop-color="#f9e596"/><stop offset="1" stop-color="#efcc66"/></linearGradient></defs><path d="M12.300 7.400q2.300 0.600 2.400 2.200v2.800q-0.200 1.600-2.400 2.100z" fill="#f3d47a" stroke="#d9b256" stroke-width="0.700"/><rect x="1.300" y="1.300" width="11.500" height="13.200" rx="0.900" fill="url(#g23)" stroke="#d9b256" stroke-width="0.800"/><rect x="12" y="9" width="1" height="4" fill="#ffffff"/><rect x="12" y="12.600" width="1" height="1" fill="#86b4ee"/><path d="M1.500 1.800l6.700 2.700q0.500 0.300 0.500 0.800v5.500l-2 1v4.600l-5.200-2.500z" fill="url(#g24)" stroke="#c9a044" stroke-width="0.800" stroke-linejoin="round"/></svg>
<span style="left:68.5px;top:155px;font-size:11px;line-height:16px;letter-spacing:0.248px;">nbproject</span>
<div style="left:33px;top:181px;width:12px;height:1px;background:repeating-linear-gradient(90deg,#7f7f7f 0,#7f7f7f 1px,transparent 1px,transparent 2px)"></div>
<svg style="left:45px;top:172px" width="17" height="17" viewBox="0 0 17 17"><defs><linearGradient id="g25" x1="0" y1="0" x2="0" y2="1"><stop offset="0" stop-color="#a9a9a2"/><stop offset="1" stop-color="#55554f"/></linearGradient><linearGradient id="g26" x1="0" y1="0" x2="1" y2="0"><stop offset="0" stop-color="#b98a22"/><stop offset="0.5" stop-color="#ecd078"/><stop offset="1" stop-color="#a87a18"/></linearGradient></defs><path d="M4.700 1.800h7.600l3.400 3.400v9.900h-11z" fill="#e6edf5" stroke="#74849a" stroke-width="1"/><path d="M12.200 2v3.300h3.300" fill="#f6f9fc" stroke="#74849a" stroke-width="0.800"/><rect x="4.200" y="8.300" width="2.600" height="7.400" fill="url(#g26)" stroke="#7a5a12" stroke-width="0.700"/><path d="M1.200 7q0-1.600 1.500-1.600h5.800q1.800 0.200 2.600 1.800v1.200h-3.200l-0.600-0.600h-6.100z" fill="url(#g25)" stroke="#4a4a46" stroke-width="0.700" stroke-linejoin="round"/></svg>
<span style="left:68.5px;top:173px;font-size:11px;line-height:16px;letter-spacing:-0.246px;">Makefile</span>
<div style="left:33px;top:199px;width:12px;height:1px;background:repeating-linear-gradient(90deg,#7f7f7f 0,#7f7f7f 1px,transparent 1px,transparent 2px)"></div>
<svg style="left:46px;top:191px" width="16" height="16" viewBox="0 0 16 16"><path d="M2.600 0.600h8.400l3.400 3.400v10.400h-11.800z" fill="#f5f8fb" stroke="#7f8c9c" stroke-width="1"/><path d="M10.900 0.800v3.300h3.300" fill="#dfe6ee" stroke="#7f8c9c" stroke-width="0.800"/><path d="M5 7.500h7M5 9.500h7M5 11.500h7" stroke="#aeb9c6" stroke-width="0.900"/><rect x="0" y="1.500" width="8" height="7" fill="#e2830f"/><path d="M6 3.700q-1.700-1.100-3.100-0.100q-1.100 1.300 0 2.800q1.400 1 3.100-0.100" fill="none" stroke="#fff" stroke-width="1.350"/></svg>
<div style="left:68px;top:190px;width:35px;height:18px;background:#3399ff;border:1px solid #0a0f1a"></div>
<span style="left:69.0px;top:191px;font-size:11px;line-height:16px;letter-spacing:-0.234px;color:#fff;">main.c</span>
<div style="left:20px;top:217px;width:6px;height:1px;background:repeating-linear-gradient(90deg,#7f7f7f 0,#7f7f7f 1px,transparent 1px,transparent 2px)"></div>
<div style="left:10px;top:213px;width:9px;height:9px;border:1px solid #9a9da2;background:linear-gradient(135deg,#fff 30%,#dde0e5);border-radius:2px"></div>
<div style="left:12px;top:217px;width:5px;height:1px;background:#27409a"></div>
<div style="left:14px;top:215px;width:1px;height:5px;background:#27409a"></div>
<svg style="left:26px;top:208px" width="16" height="18" viewBox="0 0 16 18"><defs><linearGradient id="g27" x1="0" y1="0" x2="1" y2="1"><stop offset="0" stop-color="#f6dc86"/><stop offset="1" stop-color="#ecc55a"/></linearGradient><linearGradient id="g28" x1="0" y1="0" x2="1" y2="0"><stop offset="0" stop-color="#f3d67c"/><stop offset="0.5" stop-color="#f9e596"/><stop offset="1" stop-color="#efcc66"/></linearGradient></defs><path d="M12.300 7.400q2.300 0.600 2.400 2.200v2.800q-0.200 1.600-2.400 2.100z" fill="#f3d47a" stroke="#d9b256" stroke-width="0.700"/><rect x="1.300" y="1.300" width="11.500" height="13.200" rx="0.900" fill="url(#g27)" stroke="#d9b256" stroke-width="0.800"/><rect x="12" y="9" width="1" height="4" fill="#ffffff"/><rect x="12" y="12.600" width="1" height="1" fill="#86b4ee"/><path d="M1.500 1.800l6.700 2.700q0.500 0.300 0.500 0.800v5.500l-2 1v4.600l-5.200-2.500z" fill="url(#g28)" stroke="#c9a044" stroke-width="0.800" stroke-linejoin="round"/></svg>
<span style="left:49.5px;top:209px;font-size:11px;line-height:16px;letter-spacing:-0.139px;">HelloWorld - ..\TLS0101</span>
<div style="left:20px;top:235px;width:6px;height:1px;background:repeating-linear-gradient(90deg,#7f7f7f 0,#7f7f7f 1px,transparent 1px,transparent 2px)"></div>
<div style="left:10px;top:231px;width:9px;height:9px;border:1px solid #9a9da2;background:linear-gradient(135deg,#fff 30%,#dde0e5);border-radius:2px"></div>
<div style="left:12px;top:235px;width:5px;height:1px;background:#27409a"></div>
<div style="left:14px;top:233px;width:1px;height:5px;background:#27409a"></div>
<svg style="left:26px;top:226px" width="16" height="18" viewBox="0 0 16 18"><defs><linearGradient id="g29" x1="0" y1="0" x2="1" y2="1"><stop offset="0" stop-color="#f6dc86"/><stop offset="1" stop-color="#ecc55a"/></linearGradient><linearGradient id="g30" x1="0" y1="0" x2="1" y2="0"><stop offset="0" stop-color="#f3d67c"/><stop offset="0.5" stop-color="#f9e596"/><stop offset="1" stop-color="#efcc66"/></linearGradient></defs><path d="M12.300 7.400q2.300 0.600 2.400 2.200v2.800q-0.200 1.600-2.400 2.100z" fill="#f3d47a" stroke="#d9b256" stroke-width="0.700"/><rect x="1.300" y="1.300" width="11.500" height="13.200" rx="0.900" fill="url(#g29)" stroke="#d9b256" stroke-width="0.800"/><rect x="12" y="9" width="1" height="4" fill="#ffffff"/><rect x="12" y="12.600" width="1" height="1" fill="#86b4ee"/><path d="M1.500 1.800l6.700 2.700q0.500 0.300 0.500 0.800v5.500l-2 1v4.600l-5.200-2.500z" fill="url(#g30)" stroke="#c9a044" stroke-width="0.800" stroke-linejoin="round"/></svg>
<span style="left:49.5px;top:227px;font-size:11px;line-height:16px;letter-spacing:-0.158px;">HelloWorld - ..\libLCD24</span>
<div style="left:5px;top:349px;width:425px;height:215px;border:1px solid #8b8f9e;background:#fff"></div>
<div style="left:6px;top:350px;width:423px;height:19px;background:#f3f3f3"></div>
<div style="left:6px;top:350px;width:423px;height:1px;background:#ffffff"></div>
<div style="left:6px;top:369px;width:423px;height:1px;background:#9a9da9"></div>
<div style="left:10px;top:356px;width:2px;height:2px;background:#ffffff"></div>
<div style="left:9px;top:355px;width:2px;height:2px;background:#7d7d7d"></div>
<div style="left:10px;top:360px;width:2px;height:2px;background:#ffffff"></div>
<div style="left:9px;top:359px;width:2px;height:2px;background:#7d7d7d"></div>
<div style="left:10px;top:364px;width:2px;height:2px;background:#ffffff"></div>
<div style="left:9px;top:363px;width:2px;height:2px;background:#7d7d7d"></div>
<span style="left:15.4px;top:352px;font-size:11px;line-height:16px;letter-spacing:-0.083px;font-weight:bold;">Navigator</span>
<svg style="left:402px;top:355px" width="10" height="10" viewBox="0 0 10 10"><path d="M0.600 1.600q0-1 1-1h5.800q1 0 1 1v3.600l-3.900 3.800-3.900-3.800z" fill="#c4c4c4" stroke="#3c3c3c" stroke-width="1" stroke-linejoin="round"/><rect x="1.300" y="1.200" width="6.400" height="3.400" fill="#ececec"/><path d="M2.500 2.800h4" stroke="#3c3c3c" stroke-width="1.200"/></svg>
<svg style="left:417px;top:356px" width="8" height="8" viewBox="0 0 8 8"><path d="M1.200 1.200l4.800 4.800M6 1.200l-4.800 4.800" stroke="#3c3c3c" stroke-width="2.300" stroke-linecap="round"/><path d="M1.300 1.300l4.600 4.600M5.900 1.300l-4.600 4.600" stroke="#ececec" stroke-width="0.900" stroke-linecap="round"/></svg>
<div style="left:14px;top:379px;width:1px;height:19px;background:repeating-linear-gradient(#7f7f7f 0,#7f7f7f 1px,transparent 1px,transparent 2px)"></div>
<div style="left:14px;top:379px;width:12px;height:1px;background:repeating-linear-gradient(90deg,#7f7f7f 0,#7f7f7f 1px,transparent 1px,transparent 2px)"></div>
<div style="left:14px;top:397px;width:12px;height:1px;background:repeating-linear-gradient(90deg,#7f7f7f 0,#7f7f7f 1px,transparent 1px,transparent 2px)"></div>
<svg style="left:28px;top:372px" width="14" height="14" viewBox="0 0 14 14"><defs><linearGradient id="g31" x1="0" y1="0" x2="0" y2="1"><stop offset="0" stop-color="#f9b4ae"/><stop offset="0.5" stop-color="#ee7d76"/><stop offset="1" stop-color="#f4a19b"/></linearGradient></defs><circle cx="6.600" cy="6.600" r="6" fill="url(#g31)" stroke="#a93a34" stroke-width="1"/><ellipse cx="6.600" cy="4.200" rx="4.300" ry="2.800" fill="#fbd0cc" opacity="0.700"/><path d="M5.200 9.800v-6.100h3.900M5.200 6.700h3.100" stroke="#fff" stroke-width="1.400" fill="none"/></svg>
<svg style="left:26px;top:391px" width="17" height="12" viewBox="0 0 17 12"><path d="M4.600 1.100L1.300 5.400L4.600 9.700M11.600 1.100L14.900 5.400L11.600 9.700" fill="none" stroke="#47607c" stroke-width="2.700" stroke-linejoin="round" stroke-linecap="round"/><path d="M4.600 1.100L1.300 5.400L4.600 9.700M11.600 1.100L14.900 5.400L11.600 9.700" fill="none" stroke="#eef3f8" stroke-width="1.100" stroke-linejoin="round" stroke-linecap="round"/><rect x="4.900" y="0.900" width="6.400" height="9" rx="0.800" fill="#767676" stroke="#5a5a5a" stroke-width="0.800"/><path d="M6.900 2.600v5.900M6.900 6q1.300-1.500 2.600-0.600v3.100" stroke="#fff" fill="none" stroke-width="1.250"/></svg>
<span style="left:49.5px;top:371px;font-size:11px;line-height:16px;letter-spacing:-0.112px;">main()</span>
<span style="left:49.5px;top:389px;font-size:11px;line-height:16px;letter-spacing:0.275px;">p24Fxxxx.h</span>
<div style="left:434px;top:80px;width:560px;height:264px;border:1px solid #8b8f9e;background:#fff"></div>
<div style="left:434px;top:80px;width:560px;height:1px;background:#9a9da9"></div>
<div style="left:434px;top:61px;width:268px;height:1px;background:#8b8f9e"></div>
<div style="left:434px;top:61px;width:1px;height:20px;background:#8b8f9e"></div>
<div style="left:435px;top:62px;width:82px;height:18px;background:linear-gradient(#f3f3f3 0,#eaeaea 9px,#dcdcdc 9px,#d3d3d3 100%)"></div>
<div style="left:435px;top:62px;width:82px;height:1px;background:#fcfcfc"></div>
<div style="left:435px;top:62px;width:1px;height:18px;background:#fcfcfc"></div>
<div style="left:515px;top:62px;width:1px;height:18px;background:#fcfcfc"></div>
<div style="left:516px;top:62px;width:1px;height:18px;background:#9a9da9"></div>
<span style="left:441.2px;top:63px;font-size:11px;line-height:16px;letter-spacing:-0.098px;">Start Page</span>
<svg style="left:505px;top:68px" width="8" height="8" viewBox="0 0 8 8"><path d="M1.200 1.200l4.800 4.800M6 1.200l-4.800 4.800" stroke="#3c3c3c" stroke-width="2.300" stroke-linecap="round"/><path d="M1.300 1.300l4.600 4.600M5.900 1.300l-4.600 4.600" stroke="#ececec" stroke-width="0.900" stroke-linecap="round"/></svg>
<div style="left:517px;top:62px;width:106px;height:18px;background:linear-gradient(#f3f3f3 0,#eaeaea 9px,#dcdcdc 9px,#d3d3d3 100%)"></div>
<div style="left:517px;top:62px;width:106px;height:1px;background:#fcfcfc"></div>
<div style="left:517px;top:62px;width:1px;height:18px;background:#fcfcfc"></div>
<div style="left:621px;top:62px;width:1px;height:18px;background:#fcfcfc"></div>
<div style="left:622px;top:62px;width:1px;height:18px;background:#9a9da9"></div>
<svg style="left:521px;top:63px" width="16" height="16" viewBox="0 0 16 16"><path d="M2.600 0.600h8.400l3.400 3.400v10.400h-11.800z" fill="#f5f8fb" stroke="#7f8c9c" stroke-width="1"/><path d="M10.900 0.800v3.300h3.300" fill="#dfe6ee" stroke="#7f8c9c" stroke-width="0.800"/><path d="M5 7.500h7M5 9.500h7M5 11.500h7" stroke="#aeb9c6" stroke-width="0.900"/><rect x="0" y="1.500" width="8" height="7" fill="#e2830f"/><path d="M6 3.700q-1.700-1.100-3.100-0.100q-1.100 1.300 0 2.800q1.400 1 3.100-0.100" fill="none" stroke="#fff" stroke-width="1.350"/></svg>
<span style="left:539.8px;top:63px;font-size:11px;line-height:16px;letter-spacing:-0.395px;">MainDemo.c</span>
<svg style="left:611px;top:68px" width="8" height="8" viewBox="0 0 8 8"><path d="M1.200 1.200l4.800 4.800M6 1.200l-4.800 4.800" stroke="#3c3c3c" stroke-width="2.300" stroke-linecap="round"/><path d="M1.300 1.300l4.600 4.600M5.900 1.300l-4.600 4.600" stroke="#ececec" stroke-width="0.900" stroke-linecap="round"/></svg>
<div style="left:622px;top:61px;width:80px;height:20px;background:#f3f3f3;border:1px solid #9a9da9;border-bottom:none;border-top-color:#8b8f9e"></div>
<svg style="left:627px;top:63px" width="16" height="16" viewBox="0 0 16 16"><path d="M2.600 0.600h8.400l3.400 3.400v10.400h-11.800z" fill="#f5f8fb" stroke="#7f8c9c" stroke-width="1"/><path d="M10.900 0.800v3.300h3.300" fill="#dfe6ee" stroke="#7f8c9c" stroke-width="0.800"/><path d="M5 7.500h7M5 9.500h7M5 11.500h7" stroke="#aeb9c6" stroke-width="0.900"/><rect x="0" y="1.500" width="8" height="7" fill="#e2830f"/><path d="M6 3.700q-1.700-1.100-3.100-0.100q-1.100 1.300 0 2.800q1.400 1 3.100-0.100" fill="none" stroke="#fff" stroke-width="1.350"/></svg>
<span style="left:645.3px;top:63px;font-size:11px;line-height:16px;letter-spacing:-0.118px;">main.c</span>
<svg style="left:690px;top:68px" width="8" height="8" viewBox="0 0 8 8"><path d="M1.200 1.200l4.800 4.800M6 1.200l-4.800 4.800" stroke="#3c3c3c" stroke-width="2.300" stroke-linecap="round"/><path d="M1.300 1.300l4.600 4.600M5.900 1.300l-4.600 4.600" stroke="#ececec" stroke-width="0.900" stroke-linecap="round"/></svg>
<div style="left:924px;top:61px;width:30px;height:15px;background:linear-gradient(#f7f7f7 0,#ececec 48%,#dbdbdb 52%,#d3d3d3 100%);border:1px solid #515c68;border-radius:3px"></div>
<div style="left:938px;top:62px;width:1px;height:13px;background:#8d949c"></div>
<svg style="left:928px;top:65px" width="6" height="8" viewBox="0 0 6 8"><path d="M5 0.300v7.400L0.700 4z" fill="#a4a4a4"/></svg>
<svg style="left:944px;top:65px" width="6" height="8" viewBox="0 0 6 8"><path d="M1 0.300v7.400l4.300-3.700z" fill="#a4a4a4"/></svg>
<div style="left:957px;top:61px;width:16px;height:15px;background:linear-gradient(#f7f7f7 0,#ececec 48%,#dbdbdb 52%,#d3d3d3 100%);border:1px solid #515c68;border-radius:3px"></div>
<svg style="left:961px;top:67px" width="9" height="5" viewBox="0 0 9 5"><path d="M0.500 0h7.600l-3.800 4z" fill="#33414d"/></svg>
<div style="left:977px;top:61px;width:16px;height:15px;background:linear-gradient(#f7f7f7 0,#ececec 48%,#dbdbdb 52%,#d3d3d3 100%);border:1px solid #515c68;border-radius:3px"></div>
<div style="left:981px;top:66px;width:8px;height:6px;border:1px solid #33414d;border-top-width:2px"></div>
<div style="left:435px;top:81px;width:558px;height:24px;background:#f0f0f0"></div>
<div style="left:435px;top:105px;width:558px;height:1px;background:#a9c1de"></div>
<div style="left:437px;top:84px;width:1px;height:19px;background:#7d7d7d"></div>
<div style="left:532px;top:84px;width:1px;height:19px;background:#7d7d7d"></div>
<div style="left:630px;top:84px;width:1px;height:19px;background:#7d7d7d"></div>
<div style="left:705px;top:84px;width:1px;height:19px;background:#7d7d7d"></div>
<div style="left:757px;top:84px;width:1px;height:19px;background:#7d7d7d"></div>
<div style="left:809px;top:84px;width:1px;height:19px;background:#7d7d7d"></div>
<div style="left:605px;top:83px;width:23px;height:21px;border:1px solid #525252;border-radius:4px;background:linear-gradient(#ececec,#dcdcdc);box-shadow:inset 0 0 0 1px #c6c6c6"></div>
<svg style="left:435px;top:82px" width="558" height="23" viewBox="0 0 558 23"><defs><linearGradient id="g32" x1="0" y1="0" x2="0" y2="1"><stop offset="0" stop-color="#fbe0b4"/><stop offset="0.5" stop-color="#f3b455"/><stop offset="1" stop-color="#ee9f2a"/></linearGradient><linearGradient id="g33" x1="0" y1="0" x2="0" y2="1"><stop offset="0" stop-color="#f0f8ff"/><stop offset="0.5" stop-color="#bcdffb"/><stop offset="1" stop-color="#74b6f0"/></linearGradient><linearGradient id="g34" x1="0" y1="0" x2="0" y2="1"><stop offset="0" stop-color="#d2f2fa"/><stop offset="1" stop-color="#86d3e8"/></linearGradient></defs><rect x="9.6" y="4.6" width="13.300" height="13.300" fill="#e6edf5" stroke="#596676" stroke-width="1.200"/><path d="M12.5 6.5v9.500M11.3 6.5h2.400M11.3 16h2.400" stroke="#2c3440" stroke-width="0.900"/><path d="M14.3 11.7l4.200-4v2.300h3v-2.500h3v4.300q0 1.900-1.900 1.900h-4.100v2.200z" fill="url(#g32)" stroke="#a9620c" stroke-width="1" stroke-linejoin="round"/><rect x="33.6" y="4.6" width="13.300" height="13.300" fill="#e6edf5" stroke="#596676" stroke-width="1.200"/><path d="M36 7.5h6.500M36 9.5h3.500M36 11.5h2" stroke="#8f9db0" stroke-width="0.900"/><path d="M38.2 15L41.715 11.3V13.3H48V16.7H41.715V18.7Z" fill="url(#g32)" stroke="#a9620c" stroke-width="1.100" stroke-linejoin="round"/><rect x="66.6" y="4.6" width="13.300" height="13.300" fill="#c4c9cf" stroke="#a9afb7" stroke-width="1.200"/><path d="M71 7.5h6.500M74 9.5h3.500M75.5 11.5h2" stroke="#b4bac2" stroke-width="0.900"/><path d="M74.8 15L71.285 11.3V13.3H65V16.7H71.285V18.7Z" fill="#cbbfa8" stroke="#b3a58a" stroke-width="1.100" stroke-linejoin="round"/><rect x="104.6" y="4.6" width="11.3" height="5.7" fill="url(#g32)" stroke="#a9620c" stroke-width="1.100"/><circle cx="111.5" cy="10.6" r="4.300" fill="#dfe9f3" fill-opacity="0.880" stroke="#4c5158" stroke-width="1.400"/><path d="M109 10.3h5" stroke="#9aa4b0" stroke-width="0.900"/><path d="M114.8 13.9l4.200 4.200" stroke="#1e1e1e" stroke-width="2.200" stroke-linecap="round"/><rect x="127.6" y="4.6" width="11.3" height="5.7" fill="url(#g32)" stroke="#a9620c" stroke-width="1.100"/><path d="M130.2 13.3L134.95 8.3V11.100000000000001H142.8V15.5H134.95V18.3Z" fill="url(#g33)" stroke="#1c5fb8" stroke-width="1.100" stroke-linejoin="round"/><rect x="154.4" y="4.6" width="11.3" height="5.7" fill="url(#g32)" stroke="#a9620c" stroke-width="1.100"/><path d="M163 13.3L158.25 8.3V11.100000000000001H150.4V15.5H158.25V18.3Z" fill="url(#g33)" stroke="#1c5fb8" stroke-width="1.100" stroke-linejoin="round"/><rect x="173.6" y="4.6" width="11" height="5.3" fill="url(#g32)" stroke="#a9620c" stroke-width="1.100"/><defs><linearGradient id="g35" x1="0" y1="0" x2="0" y2="1"><stop offset="0" stop-color="#e2e2e2"/><stop offset="1" stop-color="#a8a8a8"/></linearGradient></defs><rect x="177.6" y="12.6" width="11" height="5.300" fill="url(#g35)" stroke="#4e4e4e" stroke-width="1.100"/><path d="M174 11.5l3 6M185.5 5l3.200 7" stroke="#505050" stroke-width="0.900" stroke-dasharray="1 1" fill="none"/><path d="M208.5 4.6h6.500l3 2.900-3 2.900h-6.500z" fill="url(#g34)" stroke="#3d7f96" stroke-width="1"/><path d="M207.5 6.7l5.200 5.500h-3v6.400h-4.400v-6.400h-3z" fill="url(#g32)" stroke="#a9620c" stroke-width="1.100" stroke-linejoin="round"/><path d="M230.5 4.6l-0 0h-2.200v6.200h-3l5.200 5.500 5.200-5.500h-3v-6.200z" fill="url(#g32)" stroke="#a9620c" stroke-width="1.100" stroke-linejoin="round"/><path d="M234.2 12.8h4.300l3 2.900-3 2.900h-4.300l-3-2.900z" fill="url(#g34)" stroke="#3d7f96" stroke-width="1"/><path d="M248.6 4.6h6.500l3 2.900-3 2.900h-6.500z" fill="url(#g34)" stroke="#3d7f96" stroke-width="1"/><path d="M254.6 12.8h6.500l3 2.900-3 2.900h-6.500z" fill="url(#g35)" stroke="#4e4e4e" stroke-width="1"/><path d="M249.5 11.5l4.500 7M256.5 6l5 6.500" stroke="#505050" stroke-width="0.900" stroke-dasharray="1 1" fill="none"/><path d="M277.5 9.3L281.68 4.9V7.300000000000001H288V11.3H281.68V13.700000000000001Z" fill="url(#g33)" stroke="#1c5fb8" stroke-width="1.100" stroke-linejoin="round"/><path d="M289 6.5h4M289 8.5h4M289 10.5h4M289 12.5h4M289 14.5h4M279 16.5h14M279 18.5h14" stroke="#3c3c3c" stroke-width="1"/><path d="M311 9.3L306.82 4.9V7.300000000000001H300.5V11.3H306.82V13.700000000000001Z" fill="url(#g33)" stroke="#1c5fb8" stroke-width="1.100" stroke-linejoin="round"/><path d="M312 6.5h4M312 8.5h4M312 10.5h4M312 12.5h4M312 14.5h4M302 16.5h14M302 18.5h14" stroke="#3c3c3c" stroke-width="1"/><defs><linearGradient id="g36" x1="0" y1="0" x2="0" y2="1"><stop offset="0" stop-color="#fbb4b0"/><stop offset="0.5" stop-color="#f07f7b"/><stop offset="1" stop-color="#f39c98"/></linearGradient></defs><circle cx="337" cy="12" r="5.600" fill="url(#g36)" stroke="#b64a46" stroke-width="1"/><defs><linearGradient id="g37" x1="0" y1="0" x2="1" y2="1"><stop offset="0" stop-color="#dedede"/><stop offset="1" stop-color="#b4b4b4"/></linearGradient></defs><rect x="354.5" y="6.5" width="11" height="11" fill="url(#g37)" stroke="#858585" stroke-width="1"/><path d="M383.3 11.5l2.300-6 2.600 5.700 2.400-6.200" fill="none" stroke="#159015" stroke-width="2.500" stroke-linejoin="round" stroke-linecap="round"/><path d="M383.3 11.5l2.300-6 2.600 5.700 2.400-6.200" fill="none" stroke="#a6f08a" stroke-width="0.900" stroke-linejoin="round" stroke-linecap="round"/><path d="M392.5 8.5h3.500M392.5 10.5h3.500M392.5 12.5h3.500M382 14.5h14M382 16.5h14M382 18.5h14" stroke="#3c3c3c" stroke-width="1"/><path d="M415.5 8.5h3.500M415.5 10.5h3.500M415.5 12.5h3.500M405 14.5h14M405 16.5h14M405 18.5h14" stroke="#141414" stroke-width="1.150"/><path d="M428.6 5.1h3.200l9.800 9.600v2.700h-13z" fill="#d3e0ee" stroke="#7b92ae" stroke-width="1.100" stroke-linejoin="round"/><path d="M432.6 6.6v7.400h7.400z" fill="#eef3f9" stroke="#7b92ae" stroke-width="0.900"/><rect x="435.2" y="4.2" width="7.800" height="6.700" fill="#8b8b8b"/><path d="M437.6 5.3v4.700M437.6 8q1.400-1.300 2.700-0.400v2.400" stroke="#fff" fill="none" stroke-width="1.250"/><rect x="427" y="12" width="8" height="6.700" fill="#e2830f"/><path d="M433 14q-1.700-1.100-3.100-0.100q-1.100 1.300 0 2.800q1.400 1 3.100-0.100" fill="none" stroke="#fff" stroke-width="1.350"/></svg>
<svg style="left:489px;top:92px" width="7" height="4" viewBox="0 0 7 4"><path d="M0.200 0h5.600l-2.800 3.400z" fill="#36465c"/></svg>
<svg style="left:521.5px;top:92px" width="7" height="4" viewBox="0 0 7 4"><path d="M0.200 0h5.600l-2.800 3.400z" fill="#36465c"/></svg>
<div style="left:435px;top:106px;width:29px;height:237px;background:#e9e8e2"></div>
<div style="left:464px;top:106px;width:1px;height:237px;background:#dddcd5"></div>
<div style="left:488px;top:157px;width:476px;height:17px;background:#e8eef9"></div>
<span style="left:453px;top:106px;font-size:13px;line-height:17px;letter-spacing:0.188px;font-family:'Liberation Mono', monospace;">1</span>
<span style="left:488px;top:106px;font-size:13px;line-height:17px;letter-spacing:0.195px;font-family:'Liberation Mono', monospace;color:#969696;">/*</span>
<span style="left:453px;top:123px;font-size:13px;line-height:17px;letter-spacing:0.188px;font-family:'Liberation Mono', monospace;">2</span>
<span style="left:488px;top:123px;font-size:13px;line-height:17px;letter-spacing:0.199px;font-family:'Liberation Mono', monospace;color:#969696;"> * File:   newmainp24f.c</span>
<span style="left:453px;top:140px;font-size:13px;line-height:17px;letter-spacing:0.188px;font-family:'Liberation Mono', monospace;">3</span>
<span style="left:488px;top:140px;font-size:13px;line-height:17px;letter-spacing:0.199px;font-family:'Liberation Mono', monospace;color:#969696;"> * Author: rob</span>
<span style="left:453px;top:157px;font-size:13px;line-height:17px;letter-spacing:0.188px;font-family:'Liberation Mono', monospace;">4</span>
<span style="left:488px;top:157px;font-size:13px;line-height:17px;letter-spacing:0.195px;font-family:'Liberation Mono', monospace;color:#969696;"> *</span>
<span style="left:453px;top:174px;font-size:13px;line-height:17px;letter-spacing:0.188px;font-family:'Liberation Mono', monospace;">5</span>
<span style="left:488px;top:174px;font-size:13px;line-height:17px;letter-spacing:0.199px;font-family:'Liberation Mono', monospace;color:#969696;"> * Created on February 3, 2011, 2:40 PM</span>
<span style="left:453px;top:191px;font-size:13px;line-height:17px;letter-spacing:0.188px;font-family:'Liberation Mono', monospace;">6</span>
<span style="left:488px;top:191px;font-size:13px;line-height:17px;letter-spacing:0.198px;font-family:'Liberation Mono', monospace;color:#969696;"> */</span>
<span style="left:453px;top:208px;font-size:13px;line-height:17px;letter-spacing:0.188px;font-family:'Liberation Mono', monospace;">7</span>
<span style="left:453px;top:225px;font-size:13px;line-height:17px;letter-spacing:0.188px;font-family:'Liberation Mono', monospace;">8</span>
<span style="left:488px;top:225px;font-size:13px;line-height:17px;letter-spacing:0.198px;font-family:'Liberation Mono', monospace;color:#009900;">#include </span>
<span style="left:560.0px;top:225px;font-size:13px;line-height:17px;letter-spacing:0.198px;font-family:'Liberation Mono', monospace;color:#ce7b00;">&lt;p24Fxxxx.h&gt;</span>
<span style="left:453px;top:242px;font-size:13px;line-height:17px;letter-spacing:0.188px;font-family:'Liberation Mono', monospace;">9</span>
<span style="left:445px;top:259px;font-size:13px;line-height:17px;letter-spacing:0.195px;font-family:'Liberation Mono', monospace;">10</span>
<span style="left:488px;top:259px;font-size:13px;line-height:17px;letter-spacing:0.195px;font-family:'Liberation Mono', monospace;color:#0000e6;">int </span>
<span style="left:520.0px;top:259px;font-size:13px;line-height:17px;letter-spacing:0.195px;font-family:'Liberation Mono', monospace;font-weight:bold;">main</span>
<span style="left:552.0px;top:259px;font-size:13px;line-height:17px;letter-spacing:0.188px;font-family:'Liberation Mono', monospace;">(</span>
<span style="left:560.0px;top:259px;font-size:13px;line-height:17px;letter-spacing:0.195px;font-family:'Liberation Mono', monospace;color:#0000e6;">void</span>
<span style="left:592.0px;top:259px;font-size:13px;line-height:17px;letter-spacing:0.198px;font-family:'Liberation Mono', monospace;">) {</span>
<span style="left:445px;top:276px;font-size:13px;line-height:17px;letter-spacing:0.195px;font-family:'Liberation Mono', monospace;">11</span>
<span style="left:488px;top:276px;font-size:13px;line-height:17px;letter-spacing:0.195px;font-family:'Liberation Mono', monospace;">    </span>
<span style="left:520.0px;top:276px;font-size:13px;line-height:17px;letter-spacing:0.199px;font-family:'Liberation Mono', monospace;color:#0000e6;">return </span>
<span style="left:576.0px;top:276px;font-size:13px;line-height:17px;letter-spacing:0.195px;font-family:'Liberation Mono', monospace;">0;</span>
<span style="left:445px;top:293px;font-size:13px;line-height:17px;letter-spacing:0.195px;font-family:'Liberation Mono', monospace;">12</span>
<span style="left:488px;top:293px;font-size:13px;line-height:17px;letter-spacing:0.188px;font-family:'Liberation Mono', monospace;">}</span>
<span style="left:445px;top:310px;font-size:13px;line-height:17px;letter-spacing:0.195px;font-family:'Liberation Mono', monospace;">13</span>
<div style="left:468px;top:109px;width:9px;height:9px;border:1px solid #5f5f5f;background:#fff"></div>
<div style="left:470px;top:113px;width:5px;height:1px;background:#303030"></div>
<div style="left:472px;top:118px;width:1px;height:83px;background:#4a4a4a"></div>
<div style="left:472px;top:200px;width:5px;height:1px;background:#4a4a4a"></div>
<div style="left:468px;top:262px;width:9px;height:9px;border:1px solid #5f5f5f;background:#fff"></div>
<div style="left:470px;top:266px;width:5px;height:1px;background:#303030"></div>
<div style="left:472px;top:271px;width:1px;height:32px;background:#4a4a4a"></div>
<div style="left:472px;top:302px;width:5px;height:1px;background:#4a4a4a"></div>
<div style="left:964px;top:106px;width:15px;height:237px;background:#f0f0f0"></div>
<svg style="left:968px;top:113px" width="9" height="5" viewBox="0 0 9 5"><path d="M0.500 4.300h7.600l-3.800-4z" fill="#303030"/></svg>
<svg style="left:968px;top:333px" width="9" height="5" viewBox="0 0 9 5"><path d="M0.500 0h7.600l-3.800 4z" fill="#303030"/></svg>
<div style="left:964px;top:124px;width:15px;height:158px;background:linear-gradient(90deg,#f6f6f6,#e2e2e2 45%,#d0d0d0);border:1px solid #8e8e8e;border-radius:2px"></div>
<div style="left:968px;top:199px;width:7px;height:1px;background:#5a5a5a"></div>
<div style="left:968px;top:201px;width:7px;height:1px;background:#5a5a5a"></div>
<div style="left:968px;top:203px;width:7px;height:1px;background:#5a5a5a"></div>
<div style="left:968px;top:205px;width:7px;height:1px;background:#5a5a5a"></div>
<div style="left:979px;top:106px;width:14px;height:237px;background:#f0f0f0"></div>
<div style="left:982px;top:113px;width:8px;height:8px;background:#5cb85f;border:1px solid #a9d6ab"></div>
<div style="left:982px;top:162px;width:9px;height:1px;background:#404040"></div>
<div style="left:985px;top:161px;width:3px;height:3px;background:#303030"></div>
<div style="left:434px;top:348px;width:560px;height:216px;border:1px solid #8b8f9e;background:#f0f0f0"></div>
<div style="left:435px;top:349px;width:279px;height:19px;background:#f3f3f3"></div>
<div style="left:435px;top:349px;width:279px;height:1px;background:#ffffff"></div>
<div style="left:713px;top:349px;width:1px;height:19px;background:#9a9da9"></div>
<div style="left:435px;top:368px;width:558px;height:1px;background:#9a9da9"></div>
<div style="left:439px;top:355px;width:2px;height:2px;background:#ffffff"></div>
<div style="left:438px;top:354px;width:2px;height:2px;background:#7d7d7d"></div>
<div style="left:439px;top:359px;width:2px;height:2px;background:#ffffff"></div>
<div style="left:438px;top:358px;width:2px;height:2px;background:#7d7d7d"></div>
<div style="left:439px;top:363px;width:2px;height:2px;background:#ffffff"></div>
<div style="left:438px;top:362px;width:2px;height:2px;background:#7d7d7d"></div>
<span style="left:444px;top:351px;font-size:11px;line-height:16px;letter-spacing:0.159px;font-weight:bold;">Output</span>
<svg style="left:686px;top:354px" width="10" height="10" viewBox="0 0 10 10"><path d="M0.600 1.600q0-1 1-1h5.800q1 0 1 1v3.600l-3.900 3.800-3.900-3.800z" fill="#c4c4c4" stroke="#3c3c3c" stroke-width="1" stroke-linejoin="round"/><rect x="1.300" y="1.200" width="6.400" height="3.400" fill="#ececec"/><path d="M2.500 2.800h4" stroke="#3c3c3c" stroke-width="1.200"/></svg>
<svg style="left:701px;top:355px" width="8" height="8" viewBox="0 0 8 8"><path d="M1.200 1.200l4.800 4.800M6 1.200l-4.800 4.800" stroke="#3c3c3c" stroke-width="2.300" stroke-linecap="round"/><path d="M1.300 1.300l4.600 4.600M5.900 1.300l-4.600 4.600" stroke="#ececec" stroke-width="0.900" stroke-linecap="round"/></svg>
<div style="left:714px;top:349px;width:279px;height:19px;background:linear-gradient(#f3f3f3 0,#eaeaea 10px,#dcdcdc 10px,#d3d3d3 100%)"></div>
<div style="left:714px;top:349px;width:279px;height:1px;background:#fcfcfc"></div>
<div style="left:714px;top:349px;width:1px;height:19px;background:#fcfcfc"></div>
<div style="left:718px;top:355px;width:2px;height:2px;background:#ffffff"></div>
<div style="left:717px;top:354px;width:2px;height:2px;background:#7d7d7d"></div>
<div style="left:718px;top:359px;width:2px;height:2px;background:#ffffff"></div>
<div style="left:717px;top:358px;width:2px;height:2px;background:#7d7d7d"></div>
<div style="left:718px;top:363px;width:2px;height:2px;background:#ffffff"></div>
<div style="left:717px;top:362px;width:2px;height:2px;background:#7d7d7d"></div>
<span style="left:723.9px;top:351px;font-size:11px;line-height:16px;letter-spacing:0.325px;font-weight:bold;">Tasks</span>
<div style="left:460px;top:373px;width:146px;height:20px;background:linear-gradient(#f3f3f3 0,#eaeaea 10px,#dcdcdc 10px,#d3d3d3 100%);border:1px solid #8e8e8e;border-bottom:none"></div>
<div style="left:461px;top:374px;width:144px;height:1px;background:#fcfcfc"></div>
<span style="left:465.7px;top:375px;font-size:11px;line-height:16px;letter-spacing:-0.151px;">Project Loading Warning</span>
<svg style="left:590px;top:381px" width="7" height="6" viewBox="0 0 7 6"><path d="M1 1l5 4.200M6 1l-5 4.200" stroke="#1a1a1a" stroke-width="1.800"/></svg>
<div style="left:605px;top:370px;width:241px;height:24px;background:#fff;border:1px solid #8e8e8e;border-bottom:none"></div>
<span style="left:613.4px;top:373px;font-size:12px;line-height:16px;letter-spacing:-0.217px;font-weight:bold;">Graphics - Object Layer (Build, Load)</span>
<svg style="left:829px;top:379px" width="7" height="6" viewBox="0 0 7 6"><path d="M1 1l5 4.200M6 1l-5 4.200" stroke="#1a1a1a" stroke-width="1.800"/></svg>
<div style="left:439px;top:373px;width:14px;height:14px;background:#d6baba;border:1px solid #c8aaaa"></div>
<div style="left:444px;top:378px;width:5px;height:5px;background:#e0d4d4"></div>
<svg style="left:437px;top:394px" width="18" height="18" viewBox="0 0 18 18"><path d="M1.700 1.800l6.500 7-6.500 7z" fill="#e2f8d8" stroke="#2c9a1c" stroke-width="1.500" stroke-linejoin="round"/><path d="M9 1.800l6.500 7-6.500 7z" fill="#e2f8d8" stroke="#2c9a1c" stroke-width="1.500" stroke-linejoin="round"/></svg>
<div style="left:458px;top:392px;width:533px;height:170px;background:#fff;border:1px solid #7f8595"></div>
<div style="left:606px;top:392px;width:239px;height:1px;background:#ffffff"></div>
<div style="left:459px;top:395px;width:515px;height:148px;overflow:hidden">
<div style="left:298px;top:143px;width:44px;height:15px;background:#a9b6ea"></div>
<span style="left:4px;top:-7px;font-size:12px;line-height:15px;letter-spacing:-0.201px;font-family:'Liberation Mono', monospace;-webkit-text-stroke:0.250px #000;">&quot;C:\Program Files (x86)\Microchip\mplabc30\v3.30b\bin\pic30-gcc.exe&quot; -g -</span>
<span style="left:4px;top:8px;font-size:12px;line-height:15px;letter-spacing:-0.201px;font-family:'Liberation Mono', monospace;-webkit-text-stroke:0.250px #000;">&quot;C:\Program Files (x86)\Microchip\mplabc30\v3.30b\bin\pic30-gcc.exe&quot; -g -</span>
<span style="left:4px;top:23px;font-size:12px;line-height:15px;letter-spacing:-0.201px;font-family:'Liberation Mono', monospace;-webkit-text-stroke:0.250px #000;">&quot;C:\Program Files (x86)\Microchip\mplabc30\v3.30b\bin\pic30-gcc.exe&quot; -g -</span>
<span style="left:4px;top:38px;font-size:12px;line-height:15px;letter-spacing:-0.201px;font-family:'Liberation Mono', monospace;color:#ad0000;-webkit-text-stroke:0.250px #ad0000;">C:\Users\rob\AppData\Local\Temp/ccCLWyT3.s: Assembler messages:</span>
<span style="left:4px;top:53px;font-size:12px;line-height:15px;letter-spacing:-0.201px;font-family:'Liberation Mono', monospace;color:#ad0000;-webkit-text-stroke:0.250px #ad0000;">C:\Users\rob\AppData\Local\Temp/ccCLWyT3.s:2301: Warning: changed section</span>
<span style="left:4px;top:68px;font-size:12px;line-height:15px;letter-spacing:-0.201px;font-family:'Liberation Mono', monospace;-webkit-text-stroke:0.250px #000;">&quot;C:\Program Files (x86)\Microchip\mplabc30\v3.30b\bin\pic30-gcc.exe&quot; -g -</span>
<span style="left:4px;top:83px;font-size:12px;line-height:15px;letter-spacing:-0.201px;font-family:'Liberation Mono', monospace;-webkit-text-stroke:0.250px #000;">&quot;C:\Program Files (x86)\Microchip\mplabc30\v3.30b\bin\pic30-gcc.exe&quot; -g -</span>
<span style="left:4px;top:98px;font-size:12px;line-height:15px;letter-spacing:-0.201px;font-family:'Liberation Mono', monospace;-webkit-text-stroke:0.250px #000;">&quot;C:\Program Files (x86)\Microchip\mplabc30\v3.30b\bin\pic30-gcc.exe&quot;   -o</span>
<span style="left:4px;top:113px;font-size:12px;line-height:15px;letter-spacing:-0.201px;font-family:'Liberation Mono', monospace;-webkit-text-stroke:0.250px #000;">make[2]: Leaving directory `C:/RTC/Lab2/Graphics/Object Layer/MPLAB.X&#x27;</span>
<span style="left:4px;top:128px;font-size:12px;line-height:15px;letter-spacing:-0.201px;font-family:'Liberation Mono', monospace;-webkit-text-stroke:0.250px #000;">make[1]: Leaving directory `C:/RTC/Lab2/Graphics/Object Layer/MPLAB.X&#x27;</span>
<span style="left:4px;top:143px;font-size:12px;line-height:15px;letter-spacing:-0.201px;font-family:'Liberation Mono', monospace;color:#ad0000;-webkit-text-stroke:0.250px #ad0000;">c:\program files (x86)\microchip\mplabc30\v3.30b\bin\bin\..\bin/pic30-elf</span>
</div>
<div style="left:974px;top:393px;width:16px;height:151px;background:#f0f0f0"></div>
<svg style="left:978px;top:402px" width="9" height="5" viewBox="0 0 9 5"><path d="M0.500 4.300h7.600l-3.800-4z" fill="#303030"/></svg>
<svg style="left:978px;top:533px" width="9" height="5" viewBox="0 0 9 5"><path d="M0.500 0h7.600l-3.800 4z" fill="#303030"/></svg>
<div style="left:975px;top:494px;width:14px;height:17px;background:linear-gradient(90deg,#f4f4f4,#dcdcdc 50%,#cfcfcf);border:1px solid #979797;border-radius:3px"></div>
<div style="left:978px;top:499px;width:8px;height:1px;background:#5a5a5a"></div>
<div style="left:978px;top:501px;width:8px;height:1px;background:#5a5a5a"></div>
<div style="left:978px;top:503px;width:8px;height:1px;background:#5a5a5a"></div>
<div style="left:978px;top:505px;width:8px;height:1px;background:#5a5a5a"></div>
<div style="left:459px;top:543px;width:531px;height:18px;background:#f0f0f0"></div>
<svg style="left:466px;top:548px" width="5" height="8" viewBox="0 0 5 8"><path d="M4.300 0v7.400l-4-3.700z" fill="#303030"/></svg>
<svg style="left:962px;top:547px" width="6" height="9" viewBox="0 0 6 9"><path d="M0.700 0.300v7.400l4-3.700z" fill="#303030"/></svg>
<div style="left:477px;top:544px;width:10px;height:15px;background:linear-gradient(#f6f6f6,#e0e0e0 50%,#d0d0d0);border:1px solid #8e8e8e;border-radius:2px"></div>
<div style="left:2px;top:567px;width:995px;height:1px;background:#a0a0a0"></div>
<div style="left:2px;top:568px;width:995px;height:1px;background:#ffffff"></div>
<div style="left:910px;top:572px;width:1px;height:14px;background:#8c8c8c"></div>
<div style="left:971px;top:572px;width:1px;height:14px;background:#8c8c8c"></div>
<span style="left:931px;top:571px;font-size:11.5px;line-height:16px;letter-spacing:-0.034px;">4 | 2</span>
<span style="left:975px;top:571px;font-size:11px;line-height:16px;letter-spacing:-0.348px;">INS</span>
</body></html>
